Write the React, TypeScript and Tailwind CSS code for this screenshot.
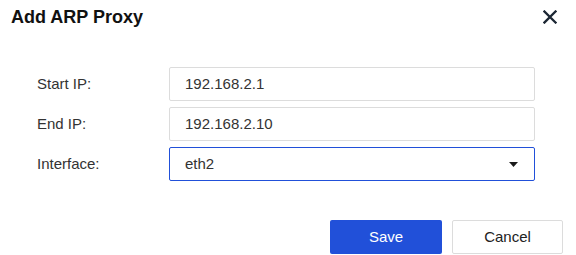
export default function App() {
  const fields = [
    { label: 'Start IP:', value: '192.168.2.1' },
    { label: 'End IP:', value: '192.168.2.10' },
  ];

  return (
    <div className="w-[576px] h-[255px] bg-white font-['Liberation_Sans',Arial,sans-serif] text-[#333333]">
      {/* header */}
      <div className="h-[34px] flex items-center justify-between pl-[11px] pr-[19px]">
        <h2 className="text-[18px] font-bold text-[#111111]">Add ARP Proxy</h2>
        <button className="w-[14px] h-[14px] flex items-center justify-center">
          <svg width="14" height="14" viewBox="0 0 14 14">
            <path d="M1.5 1.5 L12.5 12.5 M12.5 1.5 L1.5 12.5" stroke="#1b2633" strokeWidth="2.3" strokeLinecap="square" />
          </svg>
        </button>
      </div>

      {/* form */}
      <div className="mt-[33px] pl-[37px] pr-[41px] flex flex-col gap-[6px] text-[15px]">
        {fields.map((f) => (
          <div key={f.label} className="flex items-center h-[34px]">
            <label className="w-[132px] shrink-0">{f.label}</label>
            <div className="flex-1 h-full border border-[#dcdcdc] rounded-[2px] flex items-center px-[15px]">
              {f.value}
            </div>
          </div>
        ))}
        <div className="flex items-center h-[34px]">
          <label className="w-[132px] shrink-0">Interface:</label>
          <div className="flex-1 h-full border border-[#2150d9] rounded-[2px] flex items-center justify-between pl-[15px] pr-[16px]">
            <span>eth2</span>
            <svg width="9" height="5" viewBox="0 0 9 5">
              <path d="M0 0 H9 L4.5 5 Z" fill="#1a1a1a" />
            </svg>
          </div>
        </div>
      </div>

      {/* footer */}
      <div className="mt-[39px] flex justify-end gap-[10px] pr-[13px] text-[15px]">
        <button className="w-[112px] h-[34px] rounded-[2px] bg-[#2150d9] text-white">Save</button>
        <button className="w-[111px] h-[34px] rounded-[2px] border border-[#dcdcdc] bg-white text-[#222222]">Cancel</button>
      </div>
    </div>
  );
}
